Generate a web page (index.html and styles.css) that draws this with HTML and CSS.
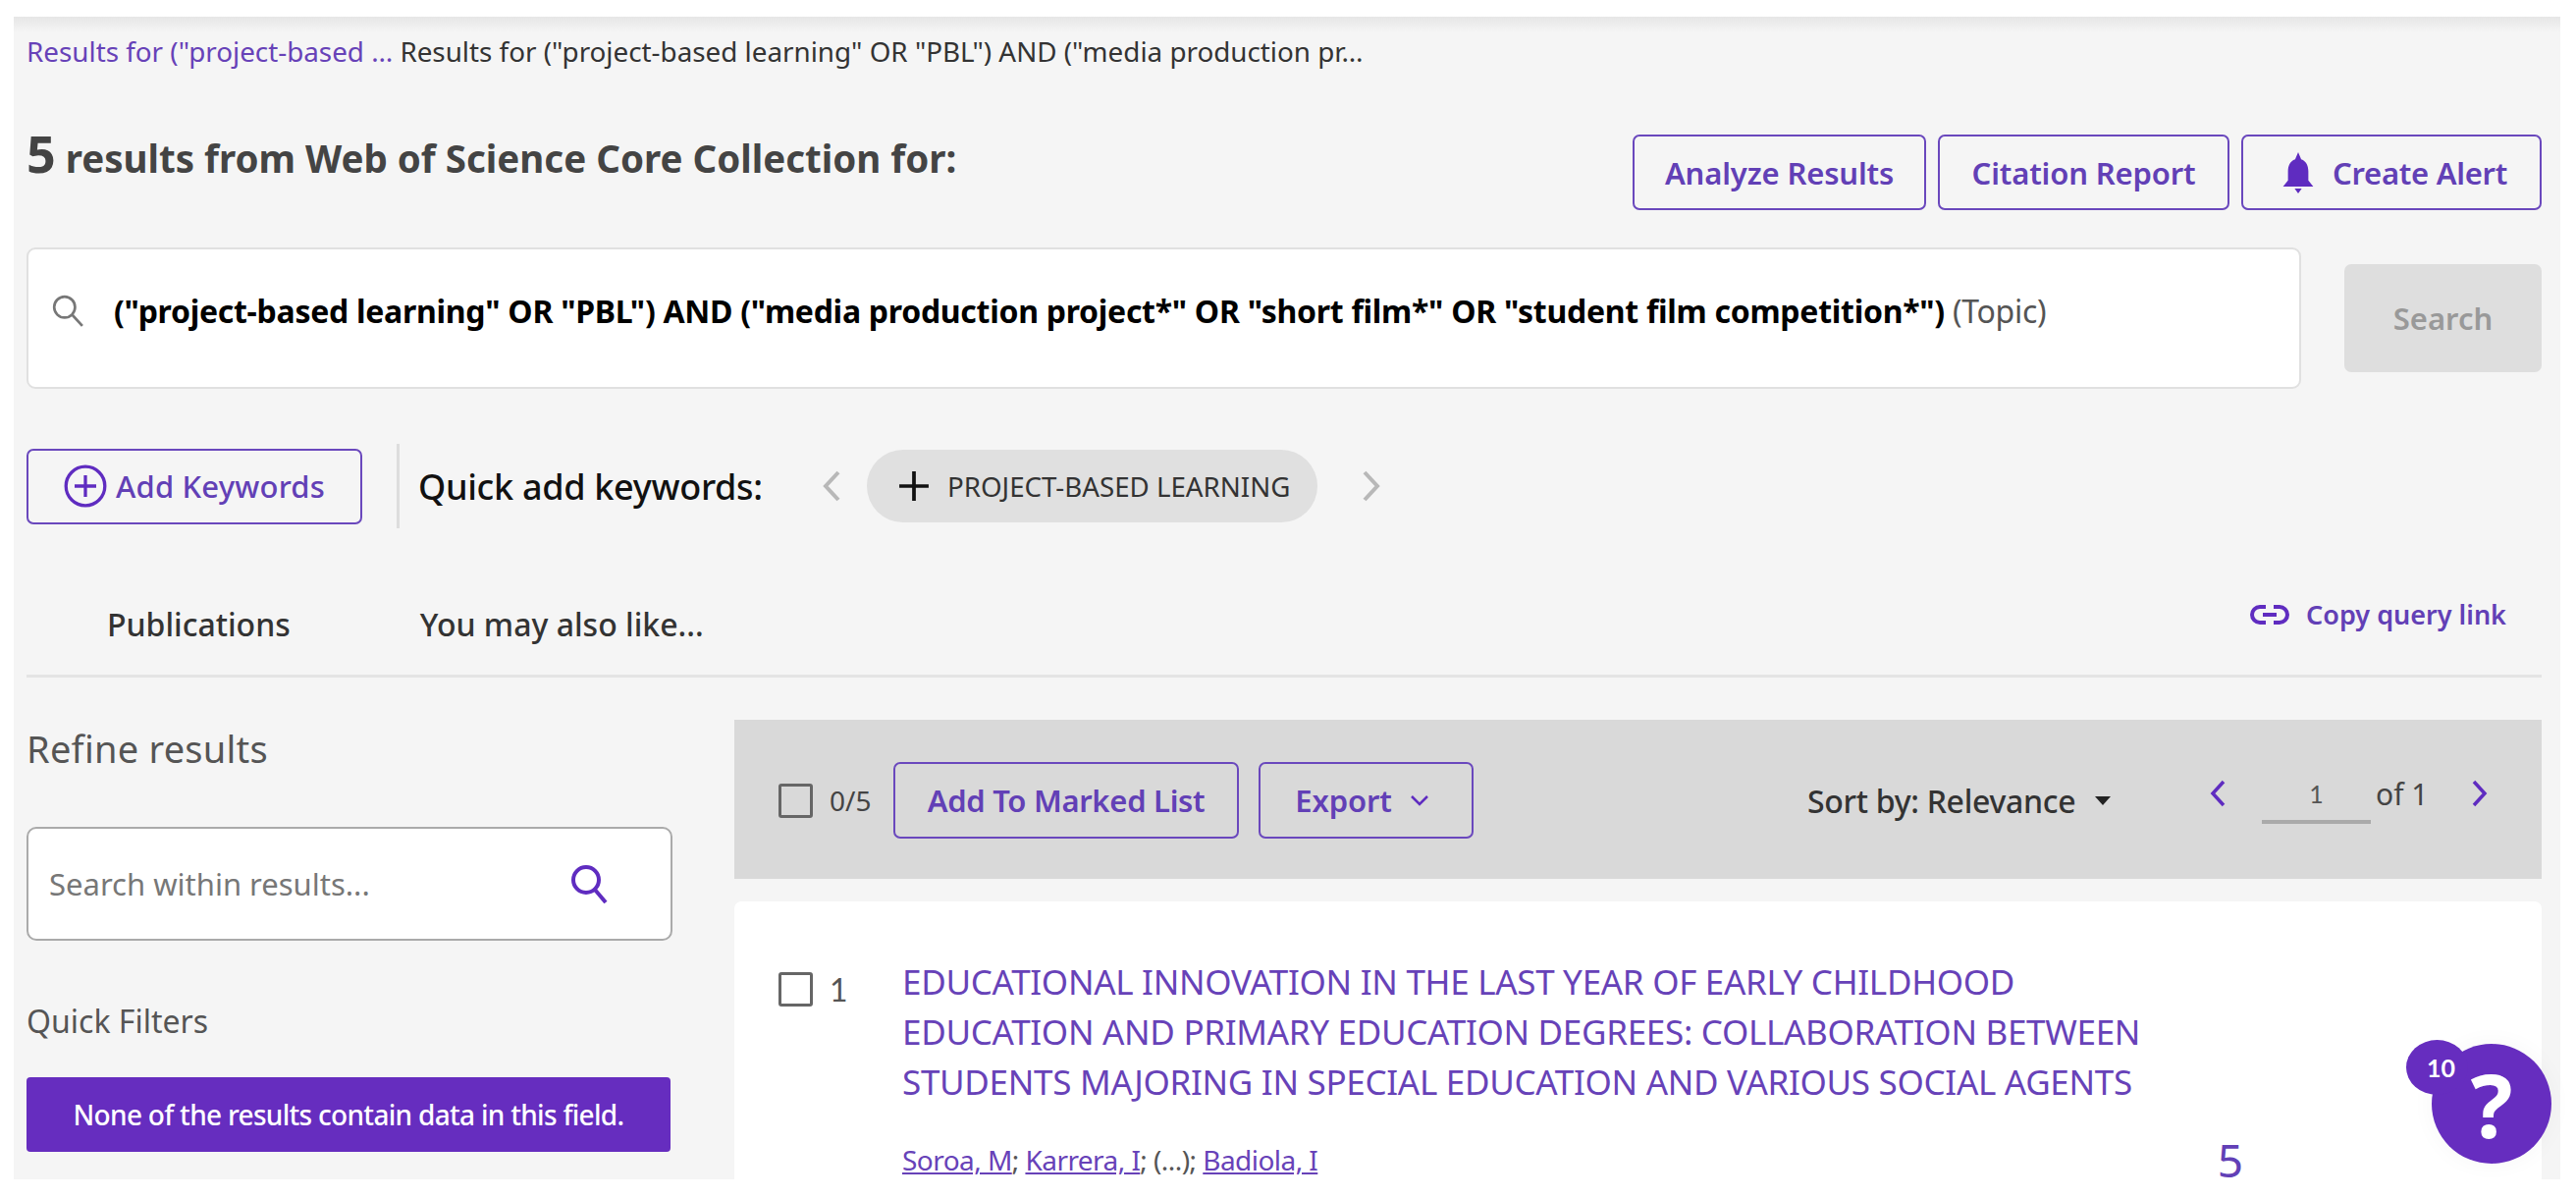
FILE: index.html
```html
<!DOCTYPE html>
<html lang="en">
<head>
<meta charset="utf-8">
<title>Web of Science results</title>
<link rel="stylesheet" href="styles.css">
</head>
<body>
<main class="page">
  <nav class="crumbs"><a class="crumb-link">Results for ("project-based …</a> <span>Results for ("project-based learning" OR "PBL") AND ("media production pr…</span></nav>

  <header class="head-row">
    <h1 class="heading"><span class="count">5</span> results from Web of Science Core Collection for:</h1>
    <div class="head-actions">
      <button class="btn btn-analyze">Analyze Results</button>
      <button class="btn btn-citation">Citation Report</button>
      <button class="btn btn-alert">
        <svg class="bell" viewBox="0 0 24 30"><path d="M12 0l2.2 5.2C18 6.6 19.4 10 19.4 14v6.5L23 25H1l3.6-4.5V14c0-4 1.400-7.400 5.200-8.800zM9.400 26.500h5.200L12 30z"/></svg>
        Create Alert
      </button>
    </div>
  </header>

  <section class="query-row">
    <div class="query-box">
      <svg class="query-icon" viewBox="0 0 32 32"><circle cx="13" cy="13" r="10"/><path d="M20 20l10 11"/></svg>
      <p class="query-text"><b>("project-based learning" OR "PBL") AND ("media production project*" OR "short film*" OR "student film competition*")</b> <span class="topic">(Topic)</span></p>
    </div>
    <button class="search-btn">Search</button>
  </section>

  <section class="keywords">
    <button class="btn btn-keywords">
      <svg class="plus-circle" viewBox="0 0 40 40"><circle cx="20" cy="20" r="18"/><path d="M20 10v20M10 20h20"/></svg>
      Add Keywords
    </button>
    <span class="kw-divider"></span>
    <span class="kw-label">Quick add keywords:</span>
    <svg class="kw-chev kw-prev" viewBox="0 0 20 32"><path d="M17 2L4 16l13 14"/></svg>
    <span class="chip">
      <svg class="chip-plus" viewBox="0 0 30 30"><path d="M15 1v28M1 15h28"/></svg>
      PROJECT-BASED LEARNING
    </span>
    <svg class="kw-chev kw-next" viewBox="0 0 20 32"><path d="M3 2l13 14L3 30"/></svg>
  </section>

  <section class="tabs">
    <span class="tab tab-pub">Publications</span>
    <span class="tab tab-like">You may also like...</span>
    <a class="copy-link">
      <svg class="link-icon" viewBox="0 0 40 20"><path d="M16 2H10a8 8 0 0 0 0 16h6M24 2h6a8 8 0 0 1 0 16h-6M13 10h14"/></svg>
      Copy query link
    </a>
  </section>

  <section class="results">
    <aside class="refine">
      <h2 class="refine-title">Refine results</h2>
      <div class="within">
        <span class="within-text">Search within results...</span>
        <svg class="within-icon" viewBox="0 0 40 40"><circle cx="17" cy="16" r="13"/><path d="M26 26l11 13"/></svg>
      </div>
      <h3 class="filters-title">Quick Filters</h3>
      <div class="notice">None of the results contain data in this field.</div>
    </aside>

    <div class="list">
      <div class="toolbar">
        <span class="check"></span>
        <span class="tally">0/5</span>
        <button class="btn btn-marked">Add To Marked List</button>
        <button class="btn btn-export">Export
          <svg class="export-chev" viewBox="0 0 20 12"><path d="M2 2l8 8 8-8"/></svg>
        </button>
        <span class="sort">Sort by: Relevance <i class="caret"></i></span>
        <svg class="pg-chev pg-prev" viewBox="0 0 18 28"><path d="M15 2L4 14l11 12"/></svg>
        <span class="pg-input">1</span>
        <span class="pg-of">of 1</span>
        <svg class="pg-chev pg-next" viewBox="0 0 18 28"><path d="M3 2l11 12L3 26"/></svg>
      </div>

      <article class="card">
        <span class="check check-card"></span>
        <span class="index">1</span>
        <div class="card-body">
          <h2 class="title">EDUCATIONAL INNOVATION IN THE LAST YEAR OF EARLY CHILDHOOD<br>EDUCATION AND PRIMARY EDUCATION DEGREES: COLLABORATION BETWEEN<br>STUDENTS MAJORING IN SPECIAL EDUCATION AND VARIOUS SOCIAL AGENTS</h2>
          <div class="authors-row">
            <p class="authors"><a>Soroa, M</a>; <a>Karrera, I</a>; (...); <a>Badiola, I</a></p>
            <span class="cites">5</span>
          </div>
        </div>
      </article>
    </div>
  </section>

  <div class="help">
    <span class="help-q">?</span>
    <span class="help-badge">10</span>
  </div>
</main>
</body>
</html>
```
FILE: styles.css
```css
* { box-sizing: border-box; }
html, body { margin: 0; padding: 0; background: #fff; }
body { width: 2624px; height: 1220px; overflow: hidden; font-family: "Noto Sans", "Open Sans", sans-serif; color: #333; }
p, h1, h2, h3 { margin: 0; }
button { font-family: inherit; cursor: pointer; }
svg { display: block; flex: none; }

.page {
  position: relative;
  margin: 17px 0 0 14px;
  width: 2594px;
  height: 1184px;
  padding: 0 19px 0 13px;
  background: linear-gradient(#e6e6e6, #f5f5f5 16px);
}

.crumbs { height: 70px; padding-top: 19px; font-size: 27.800px; line-height: 32px; color: #333; white-space: nowrap; }
.crumb-link { color: #6742b8; }

.head-row { display: flex; justify-content: space-between; align-items: flex-start; height: 165px; padding-top: 50px; }
.heading { font-size: 38.500px; font-weight: 700; line-height: 52px; color: #444; margin-top: -7px; white-space: nowrap; }
.count { font-size: 52px; font-weight: 700; }
.head-actions { display: flex; gap: 12px; }

.btn { display: inline-flex; align-items: center; justify-content: center; height: 77px; padding: 0; background: transparent; border: 2px solid #6a48bd; border-radius: 7px; color: #6240b6; font-size: 31px; font-weight: 600; letter-spacing: -.15px; white-space: nowrap; }
.btn-analyze { width: 299px; }
.btn-citation { width: 297px; }
.btn-alert { width: 306px; gap: 18px; letter-spacing: -.3px; padding-left: 6px; }
.bell { width: 34px; height: 42px; fill: #5f2cc0; }

.query-row { display: flex; justify-content: space-between; align-items: center; height: 144px; }
.query-box { display: flex; align-items: center; width: 2317px; height: 144px; background: #fff; border: 2px solid #e0e0e0; border-radius: 9px; padding: 0 0 16px 23px; }
.query-icon { width: 34px; height: 34px; fill: none; stroke: #777; stroke-width: 2.500; margin-right: 30px; }
.query-text { font-size: 32px; letter-spacing: -.28px; color: #000; white-space: nowrap; }
.query-text b { font-weight: 700; }
.topic { color: #555; }
.search-btn { width: 201px; height: 110px; border: 0; border-radius: 7px; background: #dedede; color: #999; font-size: 31px; font-weight: 600; }

.keywords { display: flex; align-items: center; height: 86px; margin-top: 56px; }
.btn-keywords { width: 342px; margin-left: 0; gap: 9px; font-weight: 500; letter-spacing: .2px; }
.plus-circle { width: 44px; height: 44px; fill: none; stroke: #5f2cc0; stroke-width: 3; }
.kw-divider { width: 3px; height: 86px; background: #ddd; margin: 0 19px 0 35px; }
.kw-label { font-size: 36px; font-weight: 500; letter-spacing: -.3px; color: #111; white-space: nowrap; width: 411px; }
.kw-chev { width: 20px; height: 32px; fill: none; stroke: #b8b8b8; stroke-width: 4; }
.kw-prev { margin-right: 26px; }
.chip { display: flex; align-items: center; width: 459px; height: 74px; padding-left: 32px; border-radius: 37px; background: #e0e0e0; font-size: 27.700px; color: #333; gap: 18px; white-space: nowrap; }
.chip-plus { width: 32px; height: 32px; fill: none; stroke: #111; stroke-width: 3.500; }
.kw-next { margin-left: 45px; }

.tabs { display: flex; align-items: center; height: 152px; padding-top: 46px; border-bottom: 3px solid #e4e4e4; }
.tab { font-size: 32px; font-weight: 500; color: #333; white-space: nowrap; }
.tab-pub { margin-left: 82px; }
.tab-like { margin-left: 132px; }
.copy-link { display: flex; align-items: center; gap: 17px; margin-left: auto; margin-right: 36px; margin-top: -20px; font-size: 27px; font-weight: 600; color: #6240b6; white-space: nowrap; }
.link-icon { width: 40px; height: 20px; fill: none; stroke: #5f2cc0; stroke-width: 4; }

.results { display: grid; grid-template-columns: 721px 1841px; margin-top: 43px; }
.refine-title { font-size: 38px; font-weight: 400; letter-spacing: .25px; line-height: 52px; color: #555; margin-top: 3px; }
.within { display: flex; align-items: center; justify-content: space-between; width: 658px; height: 116px; margin-top: 54px; padding: 0 63px 0 21px; background: #fff; border: 2px solid #aaa; border-radius: 10px; }
.within-text { font-size: 31px; color: #777; }
.within-icon { width: 40px; height: 40px; fill: none; stroke: #5f2cc0; stroke-width: 4; }
.filters-title { font-size: 32px; font-weight: 400; line-height: 40px; color: #555; margin-top: 62px; }
.notice { display: flex; align-items: center; justify-content: center; width: 656px; height: 76px; margin-top: 37px; background: #662dbf; border-radius: 4px; color: #fff; font-size: 28px; font-weight: 500; letter-spacing: -.7px; white-space: nowrap; }

.toolbar { display: flex; align-items: center; height: 162px; padding: 2px 0 0 45px; background: #d9d9d9; }
.check { display: block; flex: none; width: 35px; height: 35px; border: 3px solid #666; border-radius: 3px; }
.tally { margin-left: 17px; font-size: 28px; color: #444; width: 65px; }
.btn-marked { width: 352px; height: 78px; letter-spacing: -.3px; }
.btn-export { width: 219px; height: 78px; margin-left: 20px; gap: 18px; padding-right: 8px; }
.export-chev { width: 20px; height: 12px; fill: none; stroke: #5f2cc0; stroke-width: 2.500; }
.sort { display: flex; align-items: center; margin-left: 340px; width: 311px; font-size: 32px; font-weight: 500; letter-spacing: -.3px; color: #333; white-space: nowrap; gap: 20px; }
.caret { display: block; width: 0; height: 0; border: 8px solid transparent; border-top: 9px solid #222; border-bottom: 0; }
.pg-chev { width: 18px; height: 28px; fill: none; stroke: #5f2cc0; stroke-width: 3.500; margin-top: -14px; }
.pg-prev { margin-left: 98px; }
.pg-input { width: 111px; height: 48px; margin-left: 36px; border-bottom: 4px solid #aaa; text-align: center; font-family: "Lato", sans-serif; font-size: 25px; line-height: 34px; color: #555; }
.pg-of { margin-left: 5px; width: 97px; margin-top: -14px; font-size: 30px; color: #444; }
.pg-next { margin-top: -14px; }

.card { display: flex; height: 283px; margin-top: 23px; padding: 72px 0 0 45px; background: #fff; border-radius: 7px 7px 0 0; }
.index { margin-left: 17px; width: 74px; font-family: "Lato", sans-serif; font-size: 32px; line-height: 36px; color: #555; }
.title { font-size: 35px; font-weight: 400; letter-spacing: -.3px; line-height: 51px; color: #6742b8; white-space: nowrap; margin-top: -16px; }
.authors-row { display: flex; margin-top: 39px; width: 1366px; }
.authors { font-size: 28px; line-height: 30px; letter-spacing: -.55px; color: #555; }
.authors a { color: #6742b8; text-decoration: underline; }
.cites { margin-left: auto; font-size: 46px; line-height: 40px; color: #6240b6; margin-top: -5px; }

.help { position: absolute; left: 2463px; top: 1046px; width: 122px; height: 122px; border-radius: 50%; background: #662dbf; color: #fff; text-align: center; box-shadow: 0 0 24px rgba(0,0,0,.04); }
.help-q { display: block; font-size: 90px; font-weight: 700; line-height: 122px; }
.help-badge { position: absolute; left: -26px; top: -4px; width: 63px; height: 56px; padding-left: 8px; border-radius: 50%; background: #662dbf; font-family: "Lato", sans-serif; font-weight: 700; font-size: 25px; line-height: 56px; }
```
